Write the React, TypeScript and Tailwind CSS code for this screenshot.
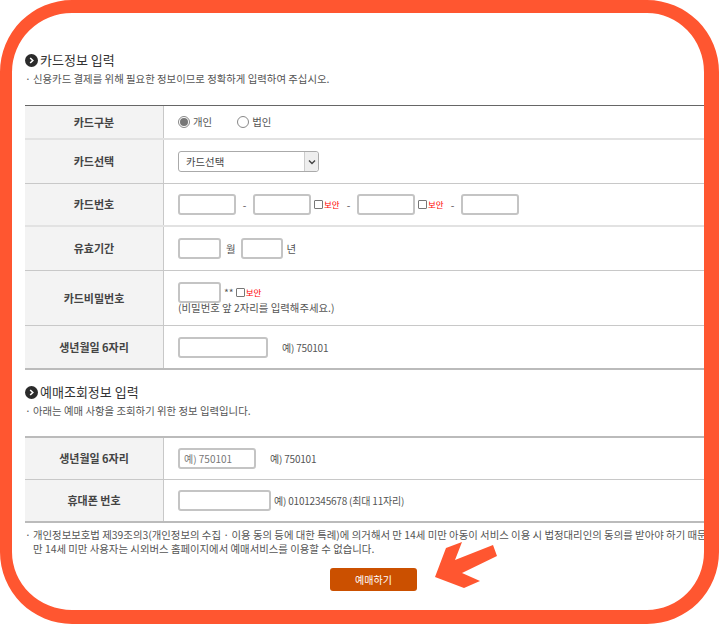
const font = '[font-family:"Noto_Sans_CJK_KR","Liberation_Sans",sans-serif]';

function Bullet() {
  return (
    <svg width="13" height="13" viewBox="0 0 13 13" className="shrink-0">
      <circle cx="6.5" cy="6.5" r="6.5" fill="#2b2b2b" />
      <path d="M5.2 4 L7.8 6.5 L5.2 9" fill="none" stroke="#fff" strokeWidth="1.6" />
    </svg>
  );
}

function SectionTitle({ title, note, boxClass, noteClass }: { title: string; note: string; boxClass: string; noteClass: string }) {
  return (
    <div className={boxClass}>
      <div className="flex items-center gap-[2px] h-[18px] text-[13px] leading-[18px] text-[#333]">
        <Bullet />
        <span>{title}</span>
      </div>
      <div className={`${noteClass} h-[14px] flex text-[10.4px] leading-[14px] text-[#555] whitespace-nowrap`}>
        <span className="w-[8px] shrink-0">·</span>
        <span>{note}</span>
      </div>
    </div>
  );
}

function Row({ label, h, border, children }: { label: string; h: string; border: string; children: React.ReactNode }) {
  return (
    <div className={`flex box-border ${h} ${border}`}>
      <div className="w-[139px] shrink-0 box-border border-r border-[#c8c8c8] bg-[#f3f3f3] flex items-center justify-center text-[11px] leading-[14px] pb-[1px] font-bold text-[#444]">
        {label}
      </div>
      <div className="flex-1 min-w-0 flex items-center pl-[14px] text-[10.4px] text-[#555] whitespace-nowrap">{children}</div>
    </div>
  );
}

function Input({ w, value }: { w: string; value?: string }) {
  return (
    <div className={`${w} h-[21px] box-border shrink-0 rounded-[3px] border-2 border-[#c4c4c4] bg-white pl-[4px] text-[10px] leading-[17px] text-[#777]`}>
      {value}
    </div>
  );
}

function Secure() {
  return (
    <span className="flex items-center">
      <span className="w-[9px] h-[9px] box-border rounded-[1px] border border-[#777] bg-white" />
      <span className="w-[16px] ml-[1px] text-[8.5px] text-[#f00]">보안</span>
    </span>
  );
}

function Dash() {
  return <span className="w-[17px] shrink-0 text-center">-</span>;
}

function Radio({ on, label }: { on?: boolean; label: string }) {
  return (
    <span className="flex items-center gap-[3px]">
      <span className="w-[12px] h-[12px] box-border rounded-full border border-[#888] bg-white flex items-center justify-center">
        {on && <span className="w-[8px] h-[8px] rounded-full bg-[#777]" />}
      </span>
      {label}
    </span>
  );
}

function Example({ text, className }: { text: string; className: string }) {
  return <span className={`${className} text-[10px] tracking-[-0.2px]`}>{text}</span>;
}

export default function App() {
  return (
    <div className={`relative w-[719px] h-[626px] bg-white overflow-hidden ${font}`}>
      <div className="box-border w-[719px] h-[624px] rounded-[72px] border-t-[13px] border-l-[12px] border-r-[15px] border-b-[14px] border-[#ff5630] overflow-hidden bg-white">
        <div className="pl-[13px] w-[692px]">
          <SectionTitle boxClass="pt-[38px] h-[92px] box-border" noteClass="mt-[3px]" title="카드정보 입력" note="신용카드 결제를 위해 필요한 정보이므로 정확하게 입력하여 주십시오." />
          <div className="border-t border-[#666]">
            <Row label="카드구분" h="h-[34px]" border="border-b-2 border-[#e2e2e2]">
              <div className="flex gap-[25px]">
                <Radio on label="개인" />
                <Radio label="법인" />
              </div>
            </Row>
            <Row label="카드선택" h="h-[44px]" border="border-b border-[#c8c8c8]">
              <div className="w-[141px] h-[21px] box-border rounded-[3px] border border-[#aaa] flex items-center justify-between pl-[7px] text-[#444]">
                <span>카드선택</span>
                <span className="w-[14px] h-full border-l border-[#ccc] bg-[#eee] rounded-r-[3px] flex items-center justify-center">
                  <svg width="8" height="6" viewBox="0 0 8 6">
                    <path d="M1 1.5 L4 4.5 L7 1.5" fill="none" stroke="#444" strokeWidth="1.4" />
                  </svg>
                </span>
              </div>
            </Row>
            <Row label="카드번호" h="h-[43px]" border="border-b-2 border-[#e2e2e2]">
              <Input w="w-[58px]" />
              <Dash />
              <Input w="w-[58px]" />
              <span className="ml-[3px]"><Secure /></span>
              <Dash />
              <Input w="w-[58px]" />
              <span className="ml-[3px]"><Secure /></span>
              <Dash />
              <Input w="w-[58px]" />
            </Row>
            <Row label="유효기간" h="h-[44px]" border="border-b border-[#c8c8c8]">
              <Input w="w-[43px]" />
              <span className="ml-[5px] mr-[5px]">월</span>
              <Input w="w-[42px]" />
              <span className="ml-[4px]">년</span>
            </Row>
            <Row label="카드비밀번호" h="h-[55px]" border="border-b border-[#c8c8c8]">
              <div>
                <div className="flex items-center">
                  <Input w="w-[43px]" />
                  <span className="ml-[3px] mr-[2px]">**</span>
                  <Secure />
                </div>
                <div className="leading-[12px] -mt-[1px]">(비밀번호 앞 2자리를 입력해주세요.)</div>
              </div>
            </Row>
            <Row label="생년월일 6자리" h="h-[44px]" border="border-b-2 border-[#bbb]">
              <Input w="w-[90px]" />
              <Example className="ml-[14px]" text="예) 750101" />
            </Row>
          </div>
          <SectionTitle boxClass="pt-[13px] h-[66px] box-border" noteClass="mt-[3px]" title="예매조회정보 입력" note="아래는 예매 사항을 조회하기 위한 정보 입력입니다." />
          <div className="border-t-2 border-[#bbb]">
            <Row label="생년월일 6자리" h="h-[42px]" border="border-b border-[#c8c8c8]">
              <Input w="w-[78px]" value="예) 750101" />
              <Example className="ml-[14px]" text="예) 750101" />
            </Row>
            <Row label="휴대폰 번호" h="h-[43px]" border="border-b-2 border-[#bbb]">
              <Input w="w-[93px]" />
              <Example className="ml-[3px]" text="예) 01012345678 (최대 11자리)" />
            </Row>
          </div>
          <div className="mt-[5px] text-[10.4px] leading-[14px] text-[#555] whitespace-nowrap">
            <div className="flex">
              <span className="w-[8px] shrink-0">·</span>
              <span>개인정보보호법 제39조의3(개인정보의 수집 · 이용 동의 등에 대한 특례)에 의거해서 만 14세 미만 아동이 서비스 이용 시 법정대리인의 동의를 받아야 하기 때문에</span>
            </div>
            <div className="pl-[8px]">만 14세 미만 사용자는 시외버스 홈페이지에서 예매서비스를 이용할 수 없습니다.</div>
          </div>
          <div className="mt-[12px] flex justify-center w-[667px] pl-[30px]">
            <button className="w-[87px] h-[23px] rounded-[3px] bg-[#cb5000] text-white text-[10px]">예매하기</button>
          </div>
        </div>
      </div>
      <svg className="absolute left-[430px] top-[538px]" width="112" height="58" viewBox="430 538 112 58">
        <polygon points="446,548 462,542 455,560 493,545 497,556 462,573 480,581 464,588 435,577" fill="#ff5630" />
      </svg>
    </div>
  );
}
